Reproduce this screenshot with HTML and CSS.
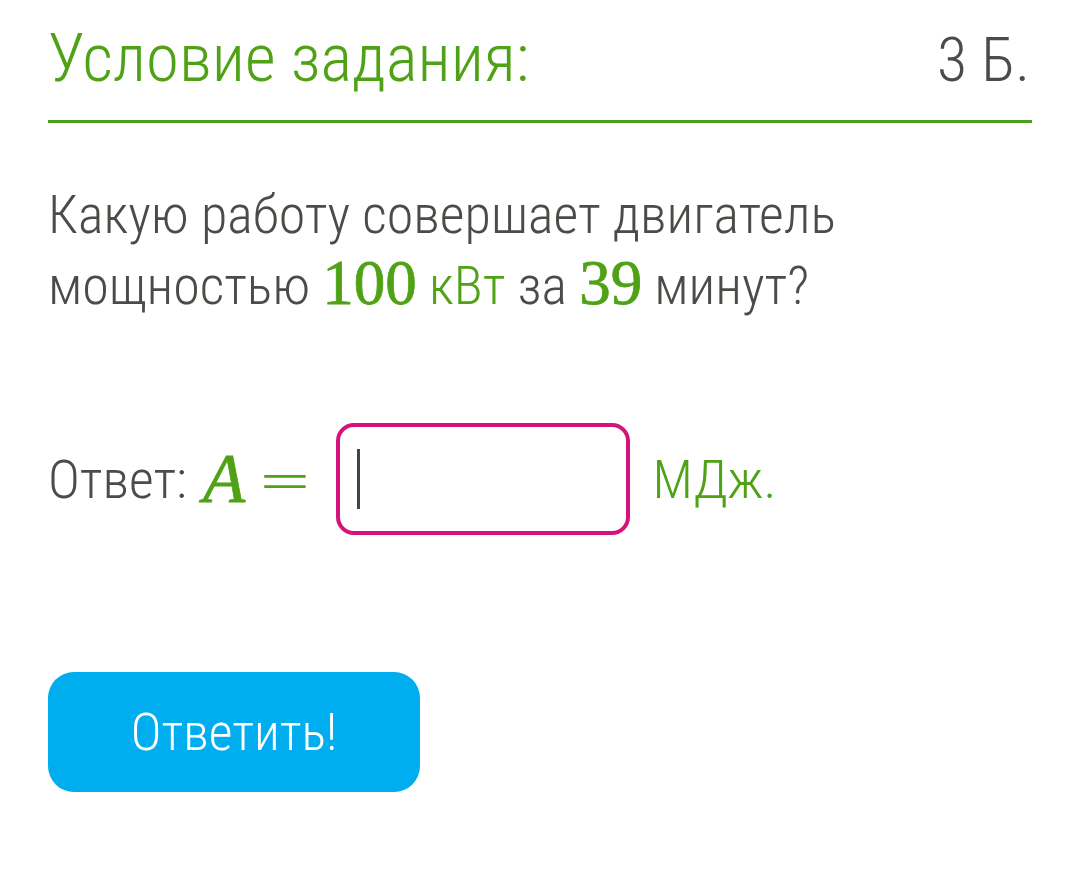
FILE: index.html
```html
<!DOCTYPE html>
<html lang="ru">
<head>
    <meta charset="UTF-8">
    <meta name="viewport" content="width=device-width, initial-scale=1.0">
    <title>Условие задания</title>
    <link rel="stylesheet" href="styles.css">
</head>
<body>
    <div class="task">
        <div class="task-header">
            <div class="task-title">Условие задания:</div>
            <div class="task-points">3 Б.</div>
        </div>

        <p class="question">
            Какую работу совершает двигатель<br>
            мощностью <span class="num">100</span> <span class="unit">кВт</span> за <span class="num">39</span> минут?
        </p>

        <div class="answer">
            <span class="answer-label">Ответ:</span>
            <span class="math"><i>A</i></span>
            <span class="eq">=</span>
            <div class="answer-input"><span class="caret"></span></div>
            <span class="unit">МДж.</span>
        </div>

        <button class="submit">Ответить!</button>
    </div>
</body>
</html>
```

FILE: styles.css
```css
body {
    margin: 0;
    background: #ffffff;
    font-family: "Roboto Condensed", Roboto, sans-serif;
    font-weight: 300;
    color: #4b4b47;
}
.task {
    width: 984px;
    padding: 0 48px;
}
.task-header {
    display: flex;
    justify-content: space-between;
    align-items: baseline;
    padding-top: 14px;
    padding-bottom: 16px;
    border-bottom: 3px solid #4c9f1d;
}
.task-title {
    font-size: 67px;
    line-height: 88px;
    color: #4fa215;
}
.task-points {
    font-size: 62px;
    line-height: 88px;
    padding-right: 2px;
}
.question {
    margin: 58px 0 0;
    font-size: 54px;
    line-height: 68px;
}
.num {
    font-family: "Liberation Serif", serif;
    font-weight: normal;
    font-size: 63px;
    color: #4fa215;
    -webkit-text-stroke: 0.8px #4fa215;
}
.unit {
    color: #4fa215;
}
.answer {
    display: flex;
    align-items: center;
    margin-top: 103px;
    font-size: 54px;
}
.math {
    font-family: "Liberation Serif", serif;
    font-size: 69px;
    color: #4fa215;
    margin-left: 16px;
    -webkit-text-stroke: 0.8px #4fa215;
}
.eq {
    font-family: "DejaVu Sans", sans-serif;
    font-weight: 200;
    font-size: 66px;
    color: #4fa215;
    margin-left: 12px;
}
.answer-input {
    width: 294px;
    height: 112px;
    margin-left: 24px;
    border: 4px solid #d5137f;
    border-radius: 18px;
    display: flex;
    align-items: center;
    padding-left: 17px;
    box-sizing: border-box;
}
.caret {
    width: 3px;
    height: 60px;
    background: #45443f;
}
.answer .unit {
    margin-left: 22px;
}
.submit {
    display: block;
    margin-top: 137px;
    width: 372px;
    height: 120px;
    background: #00aeef;
    color: #ffffff;
    border: none;
    border-radius: 26px;
    font-family: "Roboto Condensed", Roboto, sans-serif;
    font-weight: 300;
    font-size: 52px;
    padding: 0;
}
```
